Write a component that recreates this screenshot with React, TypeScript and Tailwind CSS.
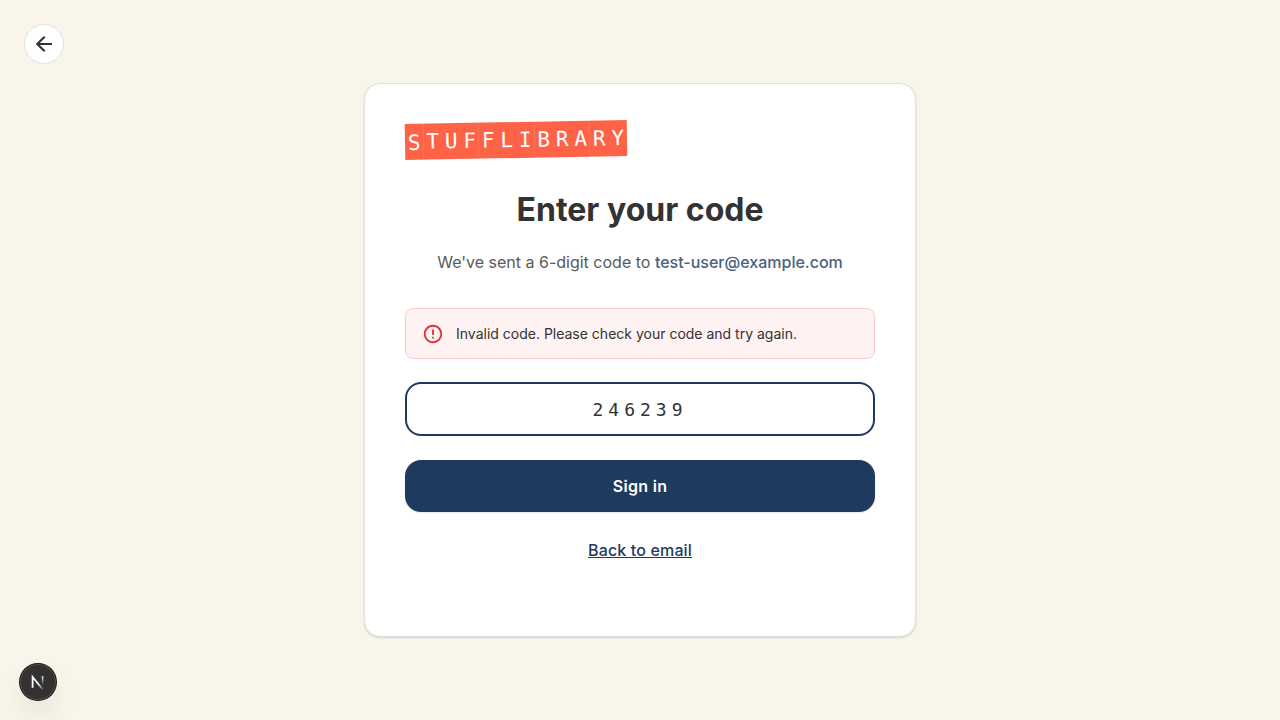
import { useState } from 'react';

const letters = [
  { char: 'S', className: 'translate-y-px' },
  { char: 'T', className: '' },
  { char: 'U', className: '' },
  { char: 'F', className: '' },
  { char: 'F', className: '' },
  { char: 'L', className: '' },
  { char: 'I', className: '' },
  { char: 'B', className: '' },
  { char: 'R', className: '' },
  { char: 'A', className: '' },
  { char: 'R', className: '' },
  { char: 'Y', className: '' },
];

function Logo() {
  return (
    <div
      aria-label="StuffLibrary"
      className="flex h-9 w-[222px] -rotate-1 bg-[#ff6347] font-['DejaVu_Sans_Mono',monospace] text-[21px] leading-9 text-white"
    >
      {letters.map((letter, i) => (
        <span
          key={i}
          className="flex-1 text-center nth-[3n+2]:shadow-[-1px_0_0_rgba(255,255,255,0.1)]"
        >
          <span className={`inline-block ${letter.className}`}>{letter.char}</span>
        </span>
      ))}
    </div>
  );
}

function BackButton() {
  return (
    <button
      type="button"
      aria-label="Go back"
      className="absolute top-6 left-6 flex size-10 items-center justify-center rounded-full border border-[#e0e3e6] bg-white text-[#333]"
    >
      <svg
        viewBox="0 0 24 24"
        className="size-6"
        fill="none"
        stroke="currentColor"
        strokeWidth="2.2"
        aria-hidden="true"
      >
        <path d="M20 12H5.2M12.7 4.7 5.2 12l7.5 7.3" strokeLinejoin="round" />
      </svg>
    </button>
  );
}

function DevBadge() {
  return (
    <button
      type="button"
      aria-label="Open Next.js Dev Tools"
      className="fixed bottom-5 left-5 flex size-9 items-center justify-center rounded-full bg-[#333230] shadow-[0_0_0_1px_#171717,inset_0_0_0_1px_rgba(255,255,255,0.14),0_16px_32px_-8px_rgba(0,0,0,0.24)]"
    >
      <svg viewBox="0 0 36 36" className="size-9" fill="none" aria-hidden="true">
        <defs>
          <linearGradient id="stem" x1="0" y1="12" x2="0" y2="21" gradientUnits="userSpaceOnUse">
            <stop stopColor="#fff" />
            <stop offset="1" stopColor="#fff" stopOpacity="0" />
          </linearGradient>
          <linearGradient id="diagonal" x1="19" y1="19" x2="24" y2="25" gradientUnits="userSpaceOnUse">
            <stop stopColor="#fff" />
            <stop offset="1" stopColor="#fff" stopOpacity="0.1" />
          </linearGradient>
        </defs>
        <path d="M12.6 23.8V13L22.6 25.3" stroke="url(#diagonal)" strokeWidth="1.8" />
        <path d="M22.6 12.2V21" stroke="url(#stem)" strokeWidth="1.6" />
      </svg>
    </button>
  );
}

export default function App() {
  const [code, setCode] = useState('246239');

  return (
    <div className="relative flex min-h-screen items-center justify-center bg-[#f9f5eb] p-6 font-[Inter,sans-serif] text-[#333]">
      <BackButton />
      <main className="w-full max-w-[552px] rounded-2xl border border-[#dddfe0] bg-white px-10 pt-[38px] pb-[74px] shadow-[0_1px_2px_rgba(0,0,0,0.14)]">
        <Logo />
        <h1 className="mt-8 text-center text-[32px] leading-10 font-bold">Enter your code</h1>
        <p className="mt-5 text-center text-base text-[#5a5a5a]">
          We've sent a 6-digit code to <span className="font-medium text-[#4a6080]">test-user@example.com</span>
        </p>
        <div
          role="alert"
          className="mt-[34px] flex items-center gap-3 rounded-lg border border-[#fecaca] bg-[#fef2f2] px-4 pt-[14px] pb-[13px] text-sm"
        >
          <svg viewBox="0 0 24 24" className="size-[22px] shrink-0 text-[#e03136]" fill="currentColor" aria-hidden="true">
            <path d="M11 15h2v2h-2zm0-8h2v6h-2zm.99-5C6.47 2 2 6.48 2 12s4.47 10 9.99 10C17.52 22 22 17.52 22 12S17.52 2 11.99 2M12 20c-4.42 0-8-3.58-8-8s3.58-8 8-8 8 3.58 8 8-3.58 8-8 8" />
          </svg>
          <p>Invalid code. Please check your code and try again.</p>
        </div>
        <form onSubmit={(e) => e.preventDefault()} className="mt-[23px] flex flex-col gap-6">
          <input
            aria-label="6-digit code"
            inputMode="numeric"
            maxLength={6}
            value={code}
            onChange={(e) => setCode(e.target.value)}
            className="h-[54px] w-full rounded-2xl border-2 border-[#1e3a5f] bg-white px-4 text-center font-['DejaVu_Sans_Mono',monospace] text-lg tracking-[5px] outline-none"
          />
          <button
            type="submit"
            className="h-[52px] w-full rounded-2xl bg-[#1e3a5f] text-base font-semibold tracking-[0.3px] text-white shadow-[0_1px_2px_rgba(0,0,0,0.1)]"
          >
            Sign in
          </button>
        </form>
        <p className="mt-[26px] text-center">
          <a href="#email" className="text-base font-medium tracking-[0.15px] text-[#1e3a5f] underline">
            Back to email
          </a>
        </p>
      </main>
      <DevBadge />
    </div>
  );
}
